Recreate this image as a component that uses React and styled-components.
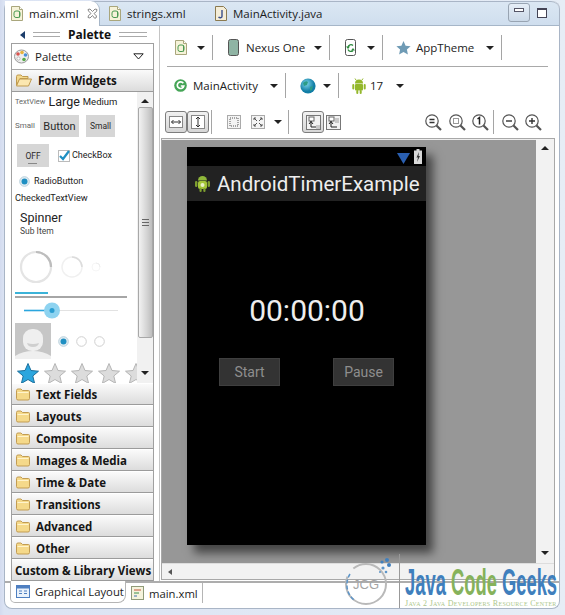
import React from 'react';
import styled, { createGlobalStyle } from 'styled-components';

const Global = createGlobalStyle`
  html, body { margin: 0; padding: 0; background: #e4ebf5; }
  body { font-family: "Open Sans", "Liberation Sans", sans-serif; color: #1c1c1c; }
  * { box-sizing: border-box; }
`;

const Window = styled.div`
  position: relative; width: 565px; height: 615px; overflow: hidden;
  padding: 1px 5px 6px 4px; display: flex; flex-direction: column;
  background: linear-gradient(90deg, #d3dbef 0, #dbe3f3 4px, #e6edf6 100%);
`;
const Frame = styled.div`
  flex: 1; display: flex; flex-direction: column; border: 1px solid #a9b5c6; border-top: 0;
  border-radius: 8px; background: #fff; min-height: 0;
`;
const TabBar = styled.div`
  height: 25px; flex: none; display: flex; align-items: flex-end; position: relative;
  background: linear-gradient(#dbe7f3, #cfdeee); border-bottom: 1px solid #a6b6c8;
  border-radius: 8px 8px 0 0; border-top: 1px solid #a9b5c6;
`;
const FileTab = styled.div`
  height: ${p => p.$active ? 25 : 24}px; width: ${p => p.$w}px; display: flex; align-items: center; gap: 6px;
  padding-left: ${p => p.$pl}px; font-size: 11.5px; white-space: nowrap;
  background: ${p => p.$active ? '#fff' : 'transparent'};
  border-radius: ${p => p.$active ? '0 9px 0 0' : 0};
  margin-bottom: ${p => p.$active ? -1 : 0}px;
  border-right: ${p => p.$active ? '1px solid #a6b6c8' : 0};
`;
const WinButtons = styled.div`
  margin-left: auto; margin-right: 12px; height: 25px; display: flex; align-items: center; gap: 7px;
`;
const WinBtn = styled.div`
  width: 22px; height: 19px; border: 1px solid #98a4b2; border-radius: 3px; display: flex;
  justify-content: center; padding-top: 4px; background: linear-gradient(#e6eef7, #cbd9e8);
`;
const MinGlyph = styled.div`width: 10px; height: 4px; border: 1px solid #556; background: #fff;`;
const MaxGlyph = styled.div`width: 10px; height: 10px; border: 1px solid #445; border-top-width: 2px; background: #fff;`;

const Main = styled.div`flex: 1; display: flex; min-height: 0;`;
const LeftPane = styled.div`
  width: 154px; flex: none; display: flex; flex-direction: column; padding-left: 6px;
`;
const PaletteTitle = styled.div`
  height: 17px; flex: none; display: flex; align-items: center; font-weight: 700; font-size: 12px; padding-left: 9px; gap: 8px; color: #111;
`;
const Grip = styled.div`
  width: ${p => p.$w}px; height: 5px; border-top: 1px solid #aaa; border-bottom: 1px solid #aaa; margin-left: ${p => p.$ml || 0}px;
`;
const PaletteBox = styled.div`
  width: 143px; border: 1px solid #a0a0a0; display: flex; flex-direction: column; height: 539px; flex: none; background: #fff;
`;
const Picker = styled.div`
  height: 25px; display: flex; align-items: center; padding: 0 9px 0 2px; gap: 6px; font-size: 11.5px; flex: none;
`;
const Drawer = styled.div`
  height: ${p => p.$h || 22}px; flex: none; display: flex; align-items: center; gap: 6px; padding-left: ${p => p.$pl || 4}px;
  font-weight: 700; font-size: 11.5px; white-space: nowrap; color: #151515;
  background: linear-gradient(#fafafa, #dcdcdc); border-bottom: 1px solid #9b9b9b; border-top: 1px solid #fff;
`;
const OpenHead = styled(Drawer)`border-top: 1px solid #a8a8a8; height: 23px;`;
const WidgetArea = styled.div`height: 291px; flex: none; display: flex; overflow: hidden;`;
const Widgets = styled.div`
  width: 125px; flex: none; overflow: hidden; padding-left: 3px; display: flex; flex-direction: column;
`;
const WRow = styled.div`
  display: flex; align-items: center; height: ${p => p.$h}px; flex: none; gap: ${p => p.$gap || 0}px;
  padding-left: ${p => p.$pl || 0}px; margin-top: ${p => p.$mt || 0}px; white-space: nowrap;
`;
const WText = styled.span`
  font-family: Roboto, sans-serif; font-size: ${p => p.$s}px; color: ${p => p.$c || '#222'}; line-height: 1;
  margin-left: ${p => p.$ml || 0}px;
`;
const GrayBtn = styled.div`
  width: ${p => p.$w}px; height: ${p => p.$h}px; background: #d6d6d6; display: flex; align-items: center; justify-content: center;
  font-family: Roboto, sans-serif; font-size: ${p => p.$s}px; color: #2a2a2a; position: relative; flex: none;
  margin-left: ${p => p.$ml || 0}px;
`;
const ToggleLine = styled.div`position: absolute; left: 11px; bottom: 3px; width: 9px; height: 1.5px; background: #888;`;
const ProgressTrack = styled.div`width: 112px; height: 2px; background: #a6a6a6; margin-top: 2px; flex: none;`;
const ProgressFill = styled.div`width: 33px; height: 2px; background: #3bb3d8; margin-top: 7px; flex: none;`;
const VBar = styled.div`
  width: 16px; flex: none; background: #f1f1f1; position: relative; display: flex; flex-direction: column; align-items: center;
`;
const Thumb = styled.div`
  width: 15px; height: 231px; margin-top: 4px; border: 1px solid #a8a8a8; border-radius: 2px;
  background: linear-gradient(90deg, #f2f2f2, #d4d4d4 60%, #bdbdbd); display: flex; align-items: center; justify-content: center; flex: none;
`;
const ThumbGrip = styled.div`width: 7px; height: 7px; border-top: 1px solid #666; border-bottom: 1px solid #666; position: relative;
  &::after { content: ''; position: absolute; left: 0; right: 0; top: 2px; height: 1px; background: #666; }`;
const Tri = styled.div`
  width: 0; height: 0; border-left: ${p => p.$w || 4}px solid transparent; border-right: ${p => p.$w || 4}px solid transparent;
  ${p => p.$up ? 'border-bottom: 4px solid #222;' : 'border-top: 4px solid #222;'}
  margin: ${p => p.$m || 0}; flex: none;
`;
const LeftTri = styled.div`width: 0; height: 0; border-top: 4px solid transparent; border-bottom: 4px solid transparent; border-right: 5px solid #1c3d6b;`;

const BottomTabs = styled.div`
  height: 27px; display: flex; align-items: flex-start; font-size: 11.3px; flex: none; border-top: 2px solid #adadad; padding-left: 5px;
`;
const BTab = styled.div`
  display: flex; align-items: center; gap: 5px; padding-left: ${p => p.$pl}px; width: ${p => p.$w}px; white-space: nowrap; flex: none;
  ${p => p.$active
    ? 'height: 22px; margin-top: -2px; border: 1px solid #b5b5b5; border-top: 0; border-radius: 0 0 8px 5px; background:#fff;'
    : 'height: 20px; border-right: 1px solid #b5b5b5;'}
`;

const RightPane = styled.div`
  flex: 1; min-width: 0; border-left: 1px solid #c4c4c4; display: flex; flex-direction: column; padding: 3px 4px 1px 1px;
`;
const ToolRow = styled.div`
  height: ${p => p.$h}px; flex: none; display: flex; align-items: center; margin-left: ${p => p.$ml || 6}px;
  width: 381px; ${p => p.$line ? 'border-bottom: 1px solid #a9a9a9;' : ''}
`;
const Cell = styled.div`
  width: ${p => p.$w}px; height: ${p => p.$h || 25}px; flex: none; display: flex; align-items: center; justify-content: space-between;
  padding: 0 7px 0 ${p => p.$pl || 8}px; border-right: 1px solid ${p => p.$plain ? 'transparent' : '#a5a5a5'};
  font-size: 11.5px; white-space: nowrap; color: #222;
`;
const Inline = styled.div`display: flex; align-items: center; gap: ${p => p.$gap || 6}px;`;
const IconRow = styled.div`
  display: flex; align-items: center; height: 26px; margin-left: 4px; flex: none; margin-top: ${p => p.$mt || 0}px; width: 390px;
`;
const ToggleBtn = styled.div`
  width: 22px; height: 22px; display: flex; align-items: center; justify-content: center; flex: none; margin-right: ${p => p.$mr || 0}px;
  ${p => p.$on ? 'border: 1px solid #7d7d7d; border-radius: 3px; background: linear-gradient(#f1f1f1,#d6d6d6);' : ''}
`;
const Sep = styled.div`width: 1px; height: 24px; background: #a5a5a5; flex: none; margin: 0 ${p => p.$r}px 0 ${p => p.$l}px;`;
const Spacer = styled.div`flex: 1;`;
const Gap = styled.div`width: ${p => p.$w}px; flex: none;`;

const Canvas = styled.div`
  margin-top: 3px; border: 1px solid #a8a8a8; flex: 1; display: flex; flex-direction: column; min-height: 0;
`;
const CanvasTop = styled.div`flex: 1; display: flex; min-height: 0;`;
const Stage = styled.div`
  flex: 1; background: #979797; padding: 7px 0 0 25px; border-top: 1px solid #eee;
`;
const Phone = styled.div`
  width: 239px; height: 398px; background: #000; box-shadow: 7px 8px 9px rgba(0,0,0,.55); display: flex; flex-direction: column;
  font-family: Roboto, sans-serif; color: #eee;
`;
const StatusBar = styled.div`height: 19px; display: flex; justify-content: flex-end; align-items: center; gap: 4px; padding: 0 4px 0 0; flex: none;`;
const ActionBar = styled.div`
  height: 35px; background: #222; display: flex; align-items: center; padding-left: 8px; gap: 7px; font-size: 20.5px; flex: none; white-space: nowrap;
`;
const Clock = styled.div`font-size: 30px; margin-top: 91px; text-align: center; height: 37px; line-height: 37px; padding-left: 1px;`;
const PhoneRow = styled.div`display: flex; justify-content: space-between; padding: 29px 32px 0 32px;`;
const PhoneBtn = styled.div`
  width: 61px; height: 28px; background: #333; border: 1px solid #3f3f3f; color: #8e8e8e; font-size: 14px; display: flex; align-items: center; justify-content: center;
`;
const SideBar = styled.div`
  width: 18px; flex: none; background: #f2f2f2; display: flex; flex-direction: column; justify-content: space-between; align-items: center; padding: 7px 0 8px;
`;
const HBar = styled.div`
  height: 16px; flex: none; background: #f2f2f2; display: flex; align-items: center; padding-left: 6px; border-top: 1px solid #ddd;
`;
const LeftSmall = styled.div`width: 0; height: 0; border-top: 3px solid transparent; border-bottom: 3px solid transparent; border-right: 4px solid #555;`;

const Watermark = styled.div`
  position: absolute; left: 342px; top: 554px; height: 54px; display: flex; pointer-events: none;
`;
const Brand = styled.div`margin-left: 4px; border-left: 1px solid #999; padding-left: 5px; height: 54px; padding-top: 15px;`;
const BrandName = styled.div`
  font-family: "Liberation Sans", sans-serif; font-weight: 700; font-size: 36px; line-height: 28px; white-space: nowrap; color: #3f7fbd;
  transform: scaleX(.51); transform-origin: left center; width: 155px;
`;
const Green = styled.span`color: #86b25b;`;
const Tagline = styled.div`
  font-family: "Liberation Serif", serif; font-size: 8px; color: #adc78c; white-space: nowrap; margin-top: 2px; font-variant: small-caps; letter-spacing: .3px;
`;

const DocIcon = ({ c = '#4b9a52' }) => (
  <svg width="12" height="15" viewBox="0 0 12 15"><path d="M.5.5h8l3 3v11H.5z" fill="#f6f3d9" stroke="#a9a67c" /><path d="M8.5.5v3h3" fill="#fff" stroke="#a9a67c" /><rect x="3" y="5" width="6" height="6.5" rx="2" fill="none" stroke={c} /><path d="M8.5 5.5v6" stroke={c} /></svg>
);
const JavaIcon = () => (
  <svg width="12" height="15" viewBox="0 0 12 15"><path d="M.5.5h8l3 3v11H.5z" fill="#f4edd8" stroke="#8b7a50" /><path d="M7 4v6.5c0 1.5-2.500 1.500-3.500.5" fill="none" stroke="#3a4f8c" strokeWidth="1.400" /></svg>
);
const CloseIcon = () => (
  <svg width="11" height="11" viewBox="0 0 11 11" fill="none" stroke="#888" style={{ marginLeft: 2 }}><path d="M1 1.500 3 1l2.500 2.500L8 1l2 .5-.5 2L7 5.500 9.500 8 9 10l-1.500.2L5.500 7.500 3 10l-2-.5.5-2L4 5.500 1.500 3z" /></svg>
);
const PaletteIcon = () => (
  <svg width="15" height="15" viewBox="0 0 15 15"><ellipse cx="7.500" cy="7.500" rx="7" ry="6.500" fill="#eee" stroke="#999" /><circle cx="4" cy="5" r="1.800" fill="#d9534f" /><circle cx="8" cy="3.500" r="1.800" fill="#e8b23a" /><circle cx="11.500" cy="6" r="1.800" fill="#4a90d9" /><circle cx="10" cy="10.500" r="1.800" fill="#58a94b" /><circle cx="4.500" cy="9.500" r="1.600" fill="#fff" stroke="#bbb" /></svg>
);
const HollowDown = () => (
  <svg width="11" height="7" viewBox="0 0 11 7" style={{ marginLeft: 'auto' }}><path d="M.8.800h9.400L5.500 6z" fill="#fff" stroke="#222" /></svg>
);
const Folder = ({ open }) => open ? (
  <svg width="16" height="13" viewBox="0 0 16 13"><path d="M.5 2.500q0-1.500 1.500-1.500h3l1.500 1.500h5.500v2H4L.5 11z" fill="#f3d98e" stroke="#c09a4e" /><path d="M3.500 5h12l-3 7H.5z" fill="#fbe7b0" stroke="#c09a4e" /></svg>
) : (
  <svg width="14" height="13" viewBox="0 0 14 13"><path d="M.5 2.500q0-1.500 1.500-1.500h3l1.500 1.500h6q1 0 1 1v7q0 1.500-1.500 1.500H2q-1.500 0-1.500-1.500z" fill="#f5d98a" stroke="#c29c52" /><path d="M1.500 4.500h11" stroke="#fff3cc" /></svg>
);
const Spin = ({ r, w, s, c = '#e4e4e4', arc = '#bdbdbd' }) => {
  const cc = s / 2;
  return (
    <svg width={s} height={s} viewBox={`0 0 ${s} ${s}`} style={{ flex: 'none' }}>
      <circle cx={cc} cy={cc} r={r} fill="none" stroke={c} strokeWidth={w} />
      <path d={`M${cc} ${cc - r}A${r} ${r} 0 0 1 ${cc + r} ${cc}`} fill="none" stroke={arc} strokeWidth={w} />
    </svg>
  );
};
const Radio = ({ on }) => (
  <svg width="11" height="11" viewBox="0 0 11 11" style={{ flex: 'none' }}><circle cx="5.500" cy="5.500" r="4.800" fill={on ? '#e4eef3' : '#fff'} stroke={on ? '#b8cfdb' : '#cfcfcf'} />{on && <circle cx="5.500" cy="5.500" r="3" fill="#1f8fc2" />}</svg>
);
const Star = ({ on }) => (
  <svg width="22" height="21" viewBox="0 0 22 21" style={{ flex: 'none' }}><path d="M11 .5l3 7 7.500.7-5.700 4.800 1.800 7.400L11 16.500 4.400 20.400 6.200 13 .5 8.200 8 7.500z" fill={on ? '#2ba6de' : '#dcdcdc'} stroke={on ? '#1b6f9c' : '#b5b5b5'} /></svg>
);
const Arrow = () => <Tri $w={4} />;

const Device = () => (
  <svg width="11" height="17" viewBox="0 0 11 17"><rect x=".5" y=".5" width="10" height="16" rx="2" fill="#8fb4a4" stroke="#555" /></svg>
);
const Rotate = () => (
  <svg width="11" height="17" viewBox="0 0 11 17"><rect x=".5" y=".5" width="10" height="16" rx="2" fill="#fff" stroke="#555" /><path d="M8 6.500A3 3 0 0 0 3 8M3 10.500a3 3 0 0 0 5 1" fill="none" stroke="#2d8a3e" strokeWidth="1.300" /><path d="M1 7.500h4L3 10zM6 11.500h4l-2-2.500z" fill="#2d8a3e" /></svg>
);
const ThemeStar = () => (
  <svg width="15" height="14" viewBox="0 0 15 14"><path d="M7.500 0l2.100 4.700 5 .6-3.700 3.300 1 5-4.400-2.500-4.400 2.500 1-5L.4 5.300l5-.6z" fill="#6f9bb5" /></svg>
);
const GIcon = () => (
  <svg width="13" height="13" viewBox="0 0 13 13"><circle cx="6.500" cy="6.500" r="6.300" fill="#46a557" /><path d="M9.300 4.300A3.300 3.300 0 1 0 9.800 7H6.800" fill="none" stroke="#fff" strokeWidth="1.700" /></svg>
);
const Globe = () => (
  <svg width="16" height="16" viewBox="0 0 16 16"><defs><radialGradient id="gl" cx=".4" cy=".35"><stop offset="0" stopColor="#7fd6ea" /><stop offset="1" stopColor="#127ea6" /></radialGradient></defs><circle cx="8" cy="8" r="7.600" fill="url(#gl)" /><path d="M3 5q3-3 5-1l-1 3-3 1zM10 9l3-1-1 4-2 1z" fill="#2e9c86" /></svg>
);
const Droid = () => (
  <svg width="16" height="16" viewBox="0 0 16 16" fill="#94b82c"><path d="M4 5.500a4 4 0 0 1 8 0z" /><path d="M5 2 4 .5M11 2l1-1.500" stroke="#94b82c" /><rect x="4" y="6" width="8" height="6.500" rx="1" /><rect x="1.300" y="6" width="2" height="5.500" rx="1" /><rect x="12.700" y="6" width="2" height="5.500" rx="1" /><rect x="5.300" y="12" width="2" height="4" rx="1" /><rect x="8.700" y="12" width="2" height="4" rx="1" /></svg>
);
const AppLauncher = () => (
  <svg width="15" height="17" viewBox="0 0 15 17"><path d="M3 5.500a4.500 4.500 0 0 1 9 0z" fill="#8fb73a" /><rect x="3" y="6" width="9" height="8" rx="2" fill="#a4c639" /><rect x="0" y="6" width="2.400" height="6" rx="1.200" fill="#7e9f2f" /><rect x="12.600" y="6" width="2.400" height="6" rx="1.200" fill="#7e9f2f" /><rect x="4.500" y="13" width="2.200" height="4" rx="1" fill="#7e9f2f" /><rect x="8.300" y="13" width="2.200" height="4" rx="1" fill="#7e9f2f" /><circle cx="7.500" cy="10" r="2" fill="#e8f0c8" /></svg>
);
const FitW = () => <svg width="14" height="12" viewBox="0 0 14 12"><rect x=".5" y=".5" width="13" height="11" fill="#fff" stroke="#888" /><path d="M2.500 6h9M4.500 4l-2 2 2 2M9.500 4l2 2-2 2" fill="none" stroke="#333" /></svg>;
const FitH = () => <svg width="14" height="14" viewBox="0 0 14 14"><rect x=".5" y=".5" width="13" height="13" fill="#fff" stroke="#888" /><path d="M7 2v10M5 4l2-2 2 2M5 10l2 2 2-2" fill="none" stroke="#333" /></svg>;
const Dotted = () => <svg width="14" height="14" viewBox="0 0 14 14"><rect x=".5" y=".5" width="13" height="13" fill="#f4f4f4" stroke="#aaa" /><rect x="3" y="3" width="8" height="8" fill="none" stroke="#555" strokeDasharray="1 1" /></svg>;
const Expand = () => <svg width="14" height="14" viewBox="0 0 14 14"><rect x=".5" y=".5" width="13" height="13" fill="#f4f4f4" stroke="#aaa" /><path d="M3 3l3 3M11 3L8 6M3 11l3-3M11 11L8 8" stroke="#555" /><path d="M3 5V3h2M9 3h2v2M3 9v2h2M9 11h2V9" fill="none" stroke="#555" /></svg>;
const Layer = ({ flip }) => <svg width="15" height="15" viewBox="0 0 15 15"><rect x=".5" y=".5" width="14" height="14" fill="#f2f2f2" stroke="#777" /><rect x="3" y="2" width="5" height="4" fill="#fff" stroke="#666" /><path d="M5 6v6h6M3 9l2-2.500L7 9" fill="none" stroke="#222" />{flip ? <rect x="9" y="3" width="4" height="5" fill="#c8c8c8" /> : <rect x="10" y="10" width="4" height="4" fill="#c8c8c8" />}</svg>;
const Mag = ({ children }) => (
  <svg width="17" height="17" viewBox="0 0 17 17" style={{ flex: 'none' }}><circle cx="7" cy="7" r="6.200" fill="#fff" stroke="#555" strokeWidth="1.200" /><path d="M11.500 11.500l4.500 4.500" stroke="#555" strokeWidth="2.200" />{children}</svg>
);
const Logo = () => (
  <svg width="53" height="52" viewBox="0 0 53 52" fill="none">
    <circle cx="24" cy="30" r="20" stroke="#b9b9b9" strokeWidth="2" strokeDasharray="70 10" />
    <path d="M8 20A20 20 0 0 0 12 46" stroke="#5c95c9" strokeWidth="1.500" strokeDasharray="4 2" />
    <circle cx="45" cy="6" r="2" fill="#3f7fbd" /><circle cx="40" cy="8" r="1.600" fill="#3f7fbd" /><circle cx="47" cy="11" r="2" fill="#3f7fbd" />
    <circle cx="41" cy="14" r="1.600" fill="#5c95c9" /><circle cx="44" cy="18" r="1.300" fill="#5c95c9" /><circle cx="38" cy="18" r="1" fill="#5c95c9" />
    <text x="24" y="35" fontFamily="Liberation Sans" fontSize="13" fill="#a5a5a5" textAnchor="middle">JCG</text>
  </svg>
);
const GLIcon = () => <svg width="14" height="13" viewBox="0 0 14 13"><rect x=".5" y=".5" width="13" height="12" fill="#eaf2fb" stroke="#4f7fc0" /><rect x=".5" y=".5" width="13" height="3" fill="#4f7fc0" /><path d="M3 6h3M3 8.500h3M8 6h3M8 8.500h3" stroke="#4f7fc0" /></svg>;
const XmlIcon = () => <svg width="13" height="14" viewBox="0 0 13 14"><rect x=".5" y=".5" width="12" height="13" fill="#f5f3dc" stroke="#8f9a78" /><path d="M3 4h7" stroke="#c2543d" /><path d="M3 7h5" stroke="#3f8f4a" /><path d="M3 10h3" stroke="#3f6fb0" /></svg>;
const Wifi = () => <svg width="13" height="14" viewBox="0 0 13 14"><path d="M0 3h13L6.500 14z" fill="#2a5fb0" /></svg>;
const Batt = () => <svg width="8" height="15" viewBox="0 0 8 15"><path d="M2.500 0h3v1.500H8V15H0V1.500h2.500z" fill="#d8d8d8" /><path d="M5 3 2.500 8.500H4L3 13l3-6H4.500z" fill="#333" /></svg>;

const drawers = ['Text Fields', 'Layouts', 'Composite', 'Images & Media', 'Time & Date', 'Transitions', 'Advanced', 'Other'];

export default function App() {
  return (
    <Window>
      <Global />
      <Frame>
        <TabBar>
          <FileTab $active $w={95} $pl={6}><DocIcon /><span>main.xml</span><CloseIcon /></FileTab>
          <FileTab $w={107} $pl={9}><DocIcon /><span>strings.xml</span></FileTab>
          <FileTab $w={120} $pl={8}><JavaIcon /><span>MainActivity.java</span></FileTab>
          <WinButtons>
            <WinBtn><MinGlyph /></WinBtn>
            <MaxGlyph />
          </WinButtons>
        </TabBar>
        <Main>
          <LeftPane>
            <PaletteTitle>
              <LeftTri />
              <Grip $w={27} />
              <span>Palette</span>
              <Grip $w={28} />
            </PaletteTitle>
            <PaletteBox>
              <Picker><PaletteIcon /><span>Palette</span><HollowDown /></Picker>
              <OpenHead><Folder open /><span>Form Widgets</span></OpenHead>
              <WidgetArea>
                <Widgets>
                  <WRow $h={20} $gap={3}>
                    <WText $s={7.500} $c="#666">TextView</WText>
                    <WText $s={12.500}>Large</WText>
                    <WText $s={9.500}>Medium</WText>
                  </WRow>
                  <WRow $h={22} $mt={3}>
                    <WText $s={8} $c="#666">Small</WText>
                    <GrayBtn $w={39} $h={22} $s={11} $ml={5}>Button</GrayBtn>
                    <GrayBtn $w={29} $h={22} $s={8.500} $ml={7}>Small</GrayBtn>
                  </WRow>
                  <WRow $h={23} $mt={7} $pl={2}>
                    <GrayBtn $w={32} $h={23} $s={8.500}>OFF<ToggleLine /></GrayBtn>
                    <svg width="12" height="12" viewBox="0 0 12 12" style={{ marginLeft: 9, flex: 'none' }}><rect x=".5" y=".5" width="11" height="11" fill="#fff" stroke="#bbb" /><path d="M2 6l3 3 6-8" fill="none" stroke="#1f8fc2" strokeWidth="2.200" /></svg>
                    <WText $s={9} $ml={2}>CheckBox</WText>
                  </WRow>
                  <WRow $h={14} $mt={7} $pl={4} $gap={4}><Radio on /><WText $s={9}>RadioButton</WText></WRow>
                  <WRow $h={14} $mt={3}><WText $s={9.200}>CheckedTextView</WText></WRow>
                  <WRow $h={17} $mt={5} $pl={5}><WText $s={12.500}>Spinner</WText></WRow>
                  <WRow $h={8} $pl={5}><WText $s={8.500} $c="#444">Sub Item</WText></WRow>
                  <WRow $h={36} $mt={14} $pl={4}>
                    <Spin s={34} r={15} w={2.200} />
                    <Gap $w={7} />
                    <Spin s={24} r={10} w={1.500} c="#f0f0f0" arc="#dcdcdc" />
                    <Gap $w={6} />
                    <Spin s={12} r={4} w={1} c="#f6f6f6" arc="#eee" />
                  </WRow>
                  <ProgressFill />
                  <ProgressTrack />
                  <WRow $h={17} $mt={4} $pl={9}>
                    <svg width="98" height="17" viewBox="0 0 98 17"><path d="M0 8.500h94" stroke="#e2e2e2" /><path d="M0 8.500h28" stroke="#2ba6de" strokeWidth="1.600" /><circle cx="28" cy="8.500" r="8" fill="#8ed3f0" /><circle cx="28" cy="8.500" r="2.500" fill="#2a9ed2" /></svg>
                  </WRow>
                  <WRow $h={36} $mt={4} $gap={7}>
                    <svg width="36" height="36" viewBox="0 0 36 36" style={{ flex: 'none' }}><rect width="36" height="36" fill="#c6c6c6" /><path d="M0 36v-3q8-5 18-5t18 5v3z" fill="#efefef" /><rect x="8" y="6" width="20" height="22" rx="9" fill="#efefef" /><path d="M12 20q6 2 12 0-1 4-6 4t-6-4z" fill="#cfcfcf" /></svg>
                    <Radio on />
                    <Radio /><Radio />
                  </WRow>
                  <WRow $h={21} $mt={4} $gap={5} $pl={2}>
                    <Star on /><Star /><Star /><Star /><Star />
                  </WRow>
                </Widgets>
                <VBar>
                  <Tri $up $m="7px 0 0" />
                  <Thumb><ThumbGrip /></Thumb>
                  <Tri $m="33px 0 0" />
                </VBar>
              </WidgetArea>
              {drawers.map(d => <Drawer key={d}><Folder /><span>{d}</span></Drawer>)}
              <Drawer $pl={3} $h={22}>Custom &amp; Library Views</Drawer>
            </PaletteBox>
          </LeftPane>
          <RightPane>
            <ToolRow $h={38} $line>
              <Cell $w={46}><DocIcon /><Arrow /></Cell>
              <Cell $w={117} $pl={15}><Inline $gap={7}><Device /><span>Nexus One</span></Inline><Arrow /></Cell>
              <Cell $w={53} $pl={15}><Rotate /><Arrow /></Cell>
              <Cell $w={119} $pl={13}><Inline $gap={5}><ThemeStar /><span>AppTheme</span></Inline><Arrow /></Cell>
            </ToolRow>
            <ToolRow $h={37}>
              <Cell $w={119} $pl={7}><Inline $gap={6}><GIcon /><span>MainActivity</span></Inline><Arrow /></Cell>
              <Cell $w={53} $pl={14}><Globe /><Arrow /></Cell>
              <Cell $w={73} $pl={12} $plain><Inline $gap={3}><Droid /><span>17</span></Inline><Arrow /></Cell>
            </ToolRow>
            <IconRow $mt={5}>
              <ToggleBtn $on><FitW /></ToggleBtn>
              <ToggleBtn $on><FitH /></ToggleBtn>
              <Sep $l={2} $r={15} />
              <Dotted />
              <Gap $w={10} />
              <Expand />
              <Tri $m="0 0 0 9px" />
              <Sep $l={6} $r={13} />
              <ToggleBtn $on $mr={2}><Layer /></ToggleBtn>
              <Layer flip />
              <Spacer />
              <Mag><path d="M4.500 5.500h5M4.500 8.500h5" stroke="#333" strokeWidth="1.300" /></Mag>
              <Gap $w={7} />
              <Mag><rect x="4.500" y="4.500" width="5" height="5" fill="none" stroke="#333" strokeDasharray="1 1" /></Mag>
              <Gap $w={6} />
              <Mag><path d="M5.500 5l2-1.500V10.500" fill="none" stroke="#222" strokeWidth="1.500" /></Mag>
              <Sep $l={4} $r={8} />
              <Mag><path d="M4 7h6" stroke="#333" strokeWidth="1.400" /></Mag>
              <Gap $w={6} />
              <Mag><path d="M4 7h6M7 4v6" stroke="#333" strokeWidth="1.400" /></Mag>
              <Gap $w={13} />
            </IconRow>
            <Canvas>
              <CanvasTop>
                <Stage>
                  <Phone>
                    <StatusBar><Wifi /><Batt /></StatusBar>
                    <ActionBar><AppLauncher /><span>AndroidTimerExample</span></ActionBar>
                    <Clock>00:00:00</Clock>
                    <PhoneRow>
                      <PhoneBtn>Start</PhoneBtn>
                      <PhoneBtn>Pause</PhoneBtn>
                    </PhoneRow>
                  </Phone>
                </Stage>
                <SideBar><Tri $up /><Tri /></SideBar>
              </CanvasTop>
              <HBar><LeftSmall /></HBar>
            </Canvas>
          </RightPane>
        </Main>
        <BottomTabs>
          <BTab $active $w={116} $pl={5}><GLIcon /><span>Graphical Layout</span></BTab>
          <BTab $w={77} $pl={5}><XmlIcon /><span>main.xml</span></BTab>
        </BottomTabs>
      </Frame>
      <Watermark>
        <Logo />
        <Brand>
          <BrandName>Java <Green>Code</Green> Geeks</BrandName>
          <Tagline>Java 2 Java Developers Resource Center</Tagline>
        </Brand>
      </Watermark>
    </Window>
  );
}
